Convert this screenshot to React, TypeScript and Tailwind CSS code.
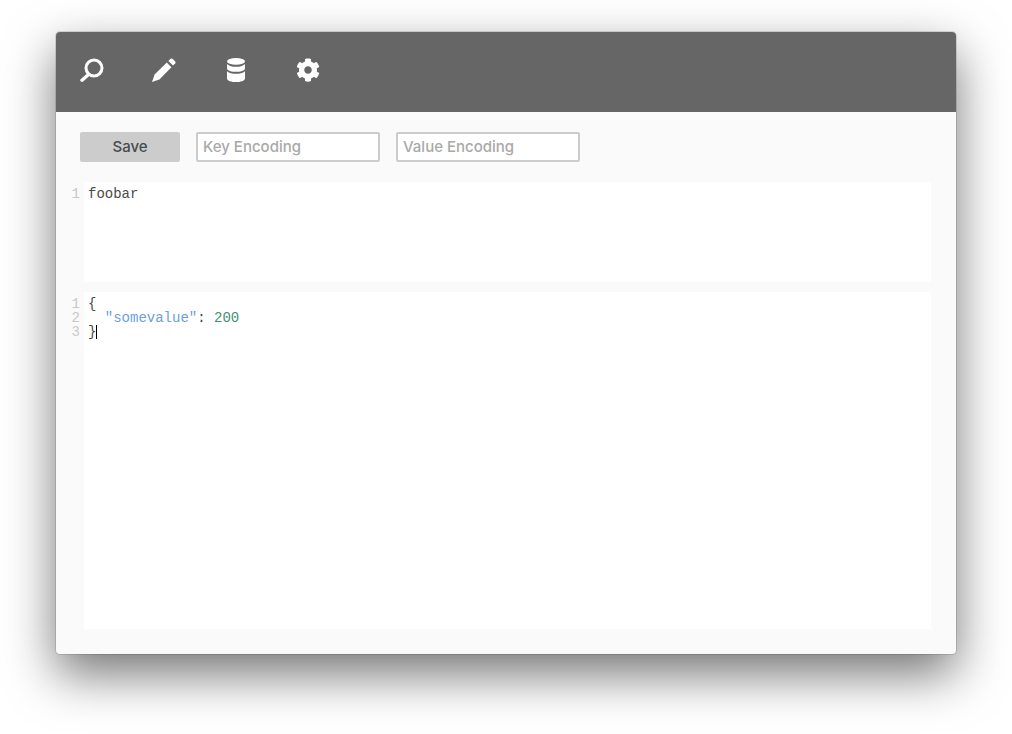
import React from 'react';
import { FaCog } from 'react-icons/fa';

const uiFont = "font-['Inter','Noto_Sans',sans-serif]";
const codeFont = "font-['Liberation_Mono',monospace]";

function SearchIcon() {
  return (
    <svg width="24" height="24" viewBox="0 0 24 24" fill="none" stroke="white">
      <circle cx="14" cy="10" r="8" strokeWidth="3" />
      <path d="M2 22.2 L8 17" strokeWidth="3.4" strokeLinecap="round" />
    </svg>
  );
}

function PencilIcon() {
  return (
    <svg width="24" height="24" viewBox="0 0 24 24" fill="white">
      <path d="M0 24 L2.6 16.6 L14.8 4.6 L19.4 9.2 L7.4 21.4 Z" />
      <path d="M16.4 3 L18.6 0.8 Q19.5 0 20.4 0.8 L23.2 3.6 Q24 4.5 23.2 5.4 L21 7.6 Z" />
    </svg>
  );
}

function DatabaseIcon() {
  return (
    <svg width="18" height="24" viewBox="0 0 18 24" fill="white">
      <ellipse cx="9" cy="3.4" rx="9" ry="3.4" />
      <path d="M0 6 C2 8.2 5.5 8.8 9 8.8 C12.5 8.8 16 8.2 18 6 V10.4 C18 12.6 13 13.8 9 13.8 C5 13.8 0 12.6 0 10.4 Z" />
      <path d="M0 13.2 C2 15.2 5.5 15.8 9 15.8 C12.5 15.8 16 15.2 18 13.2 V20.4 C18 22.8 13 24 9 24 C5 24 0 22.8 0 20.4 Z" />
    </svg>
  );
}

function CodeEditor({ className, lines }: { className: string; lines: React.ReactNode[] }) {
  return (
    <div className={`flex ${className} ${codeFont} text-[14px] leading-[14px]`}>
      {/* gutter with line numbers */}
      <div className="w-[28px] shrink-0 pt-[5px] pr-1 text-right text-[#c8c8c8]">
        {lines.map((_, i) => (
          <div key={i}>{i + 1}</div>
        ))}
      </div>
      <div className="flex-1 bg-white pt-[5px] pl-1 text-[#4a4a4a]">
        {lines.map((line, i) => (
          <div key={i} className="whitespace-pre">{line}</div>
        ))}
      </div>
    </div>
  );
}

export default function App() {
  return (
    <div className="min-h-[734px] bg-white pt-[32px] pl-[56px]">
      {/* Fenetre */}
      <div className="h-[622px] w-[900px] overflow-hidden rounded-[4px] bg-[#fafafa] shadow-[0_20px_50px_0_rgba(0,0,0,0.55),0_0_0_1px_rgba(0,0,0,0.12)]">
        {/* Barre d'icones */}
        <div className="flex h-[80px] items-center bg-[#666666] pb-1">
          <div className="flex w-[72px] items-center justify-center"><SearchIcon /></div>
          <div className="flex w-[72px] items-center justify-center"><PencilIcon /></div>
          <div className="flex w-[72px] items-center justify-center"><DatabaseIcon /></div>
          <div className="flex w-[72px] items-center justify-center"><FaCog size={24} color="white" /></div>
        </div>

        {/* Formulaire */}
        <div className={`flex gap-4 px-6 pt-5 ${uiFont}`}>
          <button className="h-[30px] w-[100px] rounded-[2px] bg-[#cccccc] text-[15px] font-medium text-[#444b4f]">Save</button>
          <input
            placeholder="Key Encoding"
            className="h-[30px] w-[184px] rounded-[2px] border-2 border-[#cccccc] bg-white px-[5px] pb-[2px] text-[15px] font-medium outline-none placeholder:text-[#a9a9a9]"
          />
          <input
            placeholder="Value Encoding"
            className="h-[30px] w-[184px] rounded-[2px] border-2 border-[#cccccc] bg-white px-[5px] pb-[2px] text-[15px] font-medium outline-none placeholder:text-[#a9a9a9]"
          />
        </div>

        {/* Editeurs */}
        <div className="mt-5 pr-[25px]">
          <CodeEditor className="h-[100px]" lines={['foobar']} />
          <CodeEditor
            className="mt-[10px] h-[337px]"
            lines={[
              '{',
              <>
                {'  '}
                <span className="text-[#6d9fdc]">"somevalue"</span>: <span className="text-[#3f9078]">200</span>
              </>,
              <>
                {'}'}
                <span className="inline-block h-[14px] w-0 border-l border-black align-top" />
              </>,
            ]}
          />
        </div>
      </div>
    </div>
  );
}
